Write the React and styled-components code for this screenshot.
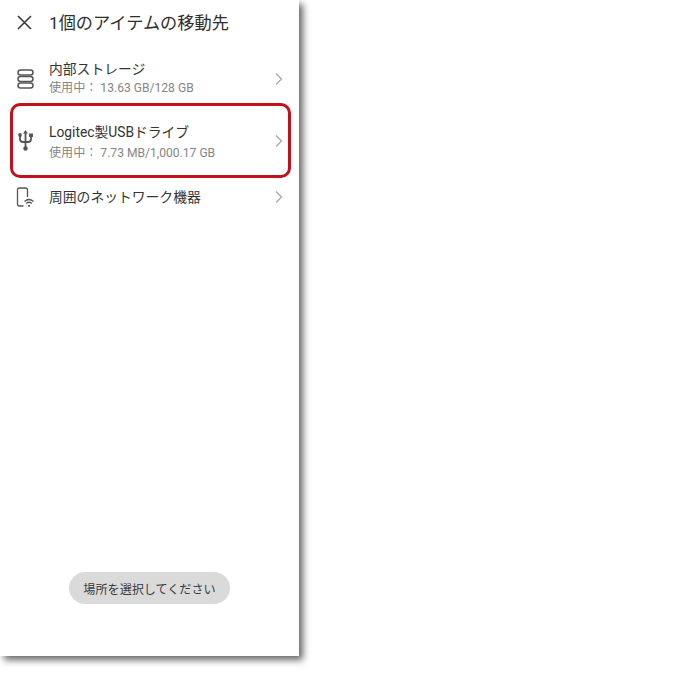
import styled, { createGlobalStyle } from "styled-components";

const GlobalStyle = createGlobalStyle`
    html, body {
        margin: 0;
        padding: 0;
        background: #FFFFFF;
        font-family: Roboto, "Noto Sans CJK JP", sans-serif;
    }
`

const Page = styled.div`
    width: 677px;
    height: 675px;
    overflow: hidden;
    background-color: #FFFFFF;
`

const Panel = styled.div`
    width: 299px;
    height: 656px;
    display: flex;
    flex-direction: column;
    background-color: #FFFFFF;
    box-shadow: 4px 4px 7px rgba(0, 0, 0, 0.6);
`

const Header = styled.div`
    height: 44px;
    display: flex;
    align-items: center;
    padding-left: 16px;
    gap: 16px;
`

const Title = styled.h1`
    margin: 0 0 2px;
    font-size: 17.2px;
    font-weight: 400;
    color: #2e2e2e;
    white-space: nowrap;
`

const Row = styled.div`
    position: relative;
    height: ${props => props.$height}px;
    display: flex;
    align-items: center;
    padding: ${props => props.$top || 0}px 16px 0 16px;
    box-sizing: border-box;
`

const IconSlot = styled.div`
    width: 18px;
    display: flex;
    justify-content: center;
    margin-right: 15px;
    color: #555555;
`

const RowText = styled.div`
    flex: 1;
    display: flex;
    flex-direction: column;
    gap: ${props => props.$gap || 3}px;
    padding-top: ${props => props.$shift || 0}px;
`

const RowTitle = styled.div`
    font-size: 13.8px;
    line-height: 17px;
    color: #333333;
`

const RowSub = styled.div`
    font-size: 12.1px;
    line-height: 15px;
    color: #858585;
`

const Highlight = styled.div`
    position: absolute;
    left: 10px;
    right: 8px;
    top: 0;
    bottom: 0;
    border: 3.5px solid #C4101A;
    border-radius: 10px;
`

const Footer = styled.div`
    margin-top: auto;
    padding-bottom: 52px;
    display: flex;
    justify-content: center;
`

const Toast = styled.div`
    width: 161px;
    height: 32px;
    display: flex;
    align-items: center;
    justify-content: center;
    border-radius: 16px;
    background-color: #DADADA;
    font-size: 12.1px;
    color: #3a3a3a;
`

const CloseIcon = () => (
    <svg width="17" height="17" viewBox="0 0 17 17" fill="none" stroke="#333333" strokeWidth="1.5">
        <path d="M2 2 L15 15 M15 2 L2 15" />
    </svg>
)

const Chevron = () => (
    <svg width="8" height="14" viewBox="0 0 8 14" fill="none" stroke="#A8A8A8" strokeWidth="1.3">
        <path d="M1 1.5 L6.5 7 L1 12.5" />
    </svg>
)

const StorageIcon = () => (
    <svg width="17" height="20" viewBox="0 0 17 20" fill="none" stroke="currentColor" strokeWidth="1.5">
        <rect x="1" y="1" width="15" height="5" rx="2.5" />
        <rect x="1" y="7.5" width="15" height="5" rx="2.5" />
        <rect x="1" y="14" width="15" height="5" rx="2.5" />
    </svg>
)

const UsbIcon = () => (
    <svg width="15" height="21" viewBox="0 0 15 21" fill="none" stroke="currentColor" strokeWidth="1.8">
        <path d="M7.5 2 V18" />
        <path d="M2 6 V9 Q2 12 5 12 H10 Q13 12 13 9 V6.5" />
        <path d="M7.5 0 L5 3.5 H10 Z" fill="currentColor" stroke="none" />
        <circle cx="2" cy="5" r="1.9" fill="currentColor" stroke="none" />
        <rect x="11" y="3.5" width="4" height="3.5" fill="currentColor" stroke="none" />
        <circle cx="7.5" cy="18.5" r="2.2" fill="currentColor" stroke="none" />
    </svg>
)

const NearbyIcon = () => (
    <svg width="18" height="21" viewBox="0 0 18 21" fill="none" stroke="currentColor" strokeWidth="1.3">
        <path d="M7.5 19 H3.5 Q1.5 19 1.5 17 V3 Q1.5 1 3.5 1 H9.5 Q11.5 1 11.5 3 V10" />
        <path d="M8.5 14.5 Q13 10.5 17.5 14.5" />
        <path d="M10.2 16.5 Q13 14 15.8 16.5" />
        <circle cx="13" cy="18.8" r="1.1" fill="currentColor" stroke="none" />
    </svg>
)

const App = () => {
    return (
        <Page>
            <GlobalStyle />
            <Panel>
                <Header>
                    <CloseIcon />
                    <Title>1個のアイテムの移動先</Title>
                </Header>
                <Row $height={59} $top={10}>
                    <IconSlot><StorageIcon /></IconSlot>
                    <RowText>
                        <RowTitle>内部ストレージ</RowTitle>
                        <RowSub>使用中： 13.63 GB/128 GB</RowSub>
                    </RowText>
                    <Chevron />
                </Row>
                <Row $height={75}>
                    <IconSlot><UsbIcon /></IconSlot>
                    <RowText $gap={5} $shift={4}>
                        <RowTitle>Logitec製USBドライブ</RowTitle>
                        <RowSub>使用中： 7.73 MB/1,000.17 GB</RowSub>
                    </RowText>
                    <Chevron />
                    <Highlight />
                </Row>
                <Row $height={38}>
                    <IconSlot><NearbyIcon /></IconSlot>
                    <RowText>
                        <RowTitle>周囲のネットワーク機器</RowTitle>
                    </RowText>
                    <Chevron />
                </Row>
                <Footer>
                    <Toast>場所を選択してください</Toast>
                </Footer>
            </Panel>
        </Page>
    )
}

export default App
